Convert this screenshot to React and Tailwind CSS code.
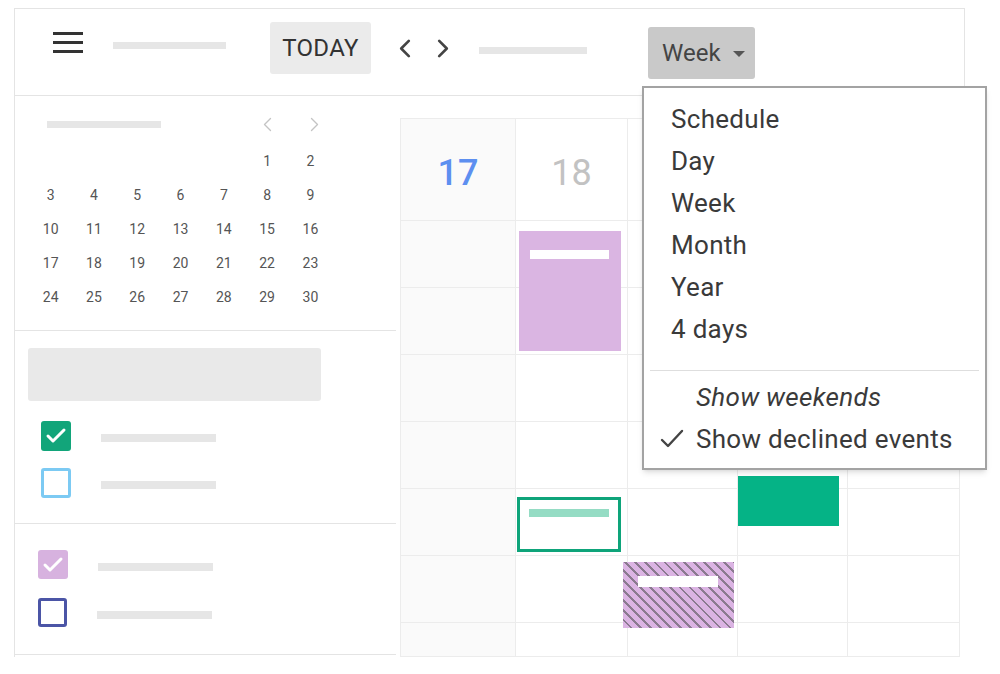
import { Check } from 'lucide-react';

const weeks = [
  [null, null, null, null, null, 1, 2],
  [3, 4, 5, 6, 7, 8, 9],
  [10, 11, 12, 13, 14, 15, 16],
  [17, 18, 19, 20, 21, 22, 23],
  [24, 25, 26, 27, 28, 29, 30],
];

const colWidths = ['w-[115px]', 'w-[112px]', 'w-[110px]', 'w-[110px]', 'w-[112px]'];

function Chevron({ dir = 'left', className = '', stroke = 2.8 }) {
  const pts = dir === 'left' ? '10,2 2,10 10,18' : '2,2 10,10 2,18';
  return (
    <svg viewBox="0 0 12 20" className={className} fill="none" stroke="currentColor" strokeWidth={stroke} strokeLinecap="round" strokeLinejoin="round">
      <polyline points={pts} />
    </svg>
  );
}

function Bar({ className = '' }) {
  return <div className={`h-[7px] bg-[#e6e6e6] ${className}`}></div>;
}

function Header() {
  return (
    <div className="h-[88px] border border-[#e4e4e4] flex items-center pb-[8px]">
      <div className="ml-[38px] mb-[12px] flex flex-col gap-[6px]">
        <div className="w-[30px] h-[3px] bg-[#333]"></div>
        <div className="w-[30px] h-[3px] bg-[#333]"></div>
        <div className="w-[30px] h-[3px] bg-[#333]"></div>
      </div>
      <Bar className="ml-[30px] w-[113px] mb-[6px]" />
      <div className="ml-[44px] w-[101px] h-[52px] bg-[#ebebeb] rounded-[3px] flex items-center justify-center text-[24px] tracking-[0.3px] text-[#333]">
        TODAY
      </div>
      <Chevron dir="left" className="ml-[28px] w-[12px] h-[19px] text-[#444]" />
      <Chevron dir="right" className="ml-[26px] w-[12px] h-[19px] text-[#444]" />
      <Bar className="ml-[30px] w-[108px] mt-[4px]" />
      <div className="ml-[61px] mt-[10px] w-[107px] h-[52px] bg-[#c9c9c9] rounded-[3px] flex items-center pl-[14px] gap-[12px] text-[24px] text-[#444]">
        <span>Week</span>
        <div className="w-0 h-0 border-x-[6px] border-x-transparent border-t-[6px] border-t-[#555] mt-[2px]"></div>
      </div>
    </div>
  );
}

function MiniCalendar() {
  return (
    <div className="pt-[16px] pb-[16px] pl-[14px] border-b border-[#e4e4e4]">
      <div className="grid grid-cols-[repeat(7,43.3px)] h-[24px] items-center">
        <div className="col-span-5 flex">
          <Bar className="ml-[18px] w-[114px]" />
        </div>
        <div className="flex justify-center"><Chevron dir="left" className="w-[9px] h-[15px] text-[#c4c4c4]" stroke={1.8} /></div>
        <div className="flex justify-center"><Chevron dir="right" className="w-[9px] h-[15px] text-[#c4c4c4] ml-[8px]" stroke={1.8} /></div>
      </div>
      <div className="mt-[8px] grid grid-cols-[repeat(7,43.3px)]">
        {weeks.flat().map((d, i) => (
          <div key={i} className="h-[34px] flex items-center justify-center text-[14px] text-[#555]">
            {d}
          </div>
        ))}
      </div>
    </div>
  );
}

function CheckRow({ box, bar = 'ml-[30px]' }) {
  return (
    <div className="flex items-center">
      {box}
      <Bar className={`${bar} w-[115px] h-[8px] mt-[4px]`} />
    </div>
  );
}

function Sidebar() {
  return (
    <div className="w-[382px] border-l border-[#e4e4e4] flex flex-col">
      <MiniCalendar />
      <div className="pt-[17px] pb-[25px] border-b border-[#e4e4e4]">
        <div className="ml-[13px] w-[293px] h-[53px] bg-[#e9e9e9] rounded-[3px]"></div>
        <div className="ml-[26px] mt-[20px] flex flex-col gap-[17px]">
          <CheckRow
            box={
              <div className="w-[30px] h-[30px] rounded-[3px] bg-[#12a57a] flex items-center justify-center">
                <Check size={24} strokeWidth={3} className="text-white" />
              </div>
            }
          />
          <CheckRow box={<div className="w-[30px] h-[30px] rounded-[3px] border-[3px] border-[#7ccaf3]"></div>} />
        </div>
      </div>
      <div className="pt-[26px] pb-[27px] border-b border-[#e4e4e4]">
        <div className="ml-[23px] flex flex-col gap-[19px]">
          <CheckRow
            box={
              <div className="w-[30px] h-[29px] rounded-[3px] bg-[#d7b2df] flex items-center justify-center">
                <Check size={24} strokeWidth={3} className="text-white" />
              </div>
            }
          />
          <CheckRow box={<div className="w-[29px] h-[29px] rounded-[3px] border-[3px] border-[#4b55a6]"></div>} />
        </div>
      </div>
    </div>
  );
}

function Column({ index, header, children }) {
  return (
    <div className={`${colWidths[index]} border-r border-[#ececec] flex flex-col ${index === 0 ? 'bg-[#fafafa]' : ''}`}>
      <div className="h-[102px] border-b border-[#ececec] flex items-center justify-center">{header}</div>
      <div className="relative">
        {[0, 1, 2, 3, 4, 5].map((r) => (
          <div key={r} className="h-[67px] border-b border-[#ececec]"></div>
        ))}
        <div className="h-[34px] border-b border-[#ececec]"></div>
        {children}
      </div>
    </div>
  );
}

function Grid() {
  return (
    <div className="ml-[4px] mt-[22px] flex border-l border-t border-[#ececec] self-start">
      <Column index={0} header={<span className="text-[36px] font-medium text-[#5d8ff0] mt-[6px]">17</span>} />
      <Column index={1} header={<span className="text-[36px] text-[#c2c2c2] mt-[6px]">18</span>}>
        <div className="absolute left-[3px] top-[10px] w-[102px] h-[120px] bg-[#dab5e2] pt-[19px] pl-[11px]">
          <div className="w-[79px] h-[9px] bg-white"></div>
        </div>
        <div className="absolute left-[1px] top-[276px] w-[104px] h-[55px] border-[3px] border-[#0ea47a] bg-white pt-[9px] pl-[9px]">
          <div className="w-[80px] h-[8px] bg-[#95dcc4]"></div>
        </div>
      </Column>
      <Column index={2}>
        <div className="absolute left-[-5px] top-[341px] w-[111px] h-[66px] bg-[repeating-linear-gradient(45deg,#dbb4e3_0px,#dbb4e3_5px,#8a7a8f_5px,#8a7a8f_7px)] pt-[14px] pl-[15px]">
          <div className="w-[80px] h-[11px] bg-white"></div>
        </div>
      </Column>
      <Column index={3}>
        <div className="absolute left-0 top-[255px] w-[101px] h-[50px] bg-[#05b386]"></div>
      </Column>
      <Column index={4} />
    </div>
  );
}

function ViewMenu() {
  const items = ['Schedule', 'Day', 'Week', 'Month', 'Year', '4 days'];
  return (
    <div className="absolute left-[642px] top-[86px] w-[345px] h-[384px] bg-white border-2 border-[#a3a3a3] shadow-md text-[26px] tracking-[0.3px] text-[#3a3a3a]">
      <div className="pt-[10px]">
        {items.map((it) => (
          <div key={it} className="h-[42px] flex items-center pl-[27px]">
            {it}
          </div>
        ))}
      </div>
      <div className="mx-[6px] mt-[20px] border-t border-[#dedede]"></div>
      <div className="mt-[5px]">
        <div className="h-[42px] flex items-center pl-[52px] italic">Show weekends</div>
        <div className="h-[42px] flex items-center pl-[16px]">
          <svg viewBox="0 0 24 20" className="w-[24px] h-[20px] mr-[12px]" fill="none" stroke="#444" strokeWidth="2.4" strokeLinecap="round" strokeLinejoin="round">
            <polyline points="2,11 8,17 22,2" />
          </svg>
          Show declined events
        </div>
      </div>
    </div>
  );
}

export default function App() {
  return (
    <div className="relative w-[1000px] h-[674px] bg-white overflow-hidden font-['Roboto',sans-serif]">
      <div className="ml-[14px] pt-[8px] w-[951px]">
        <Header />
        <div className="flex">
          <Sidebar />
          <Grid />
        </div>
      </div>
      <ViewMenu />
    </div>
  );
}
